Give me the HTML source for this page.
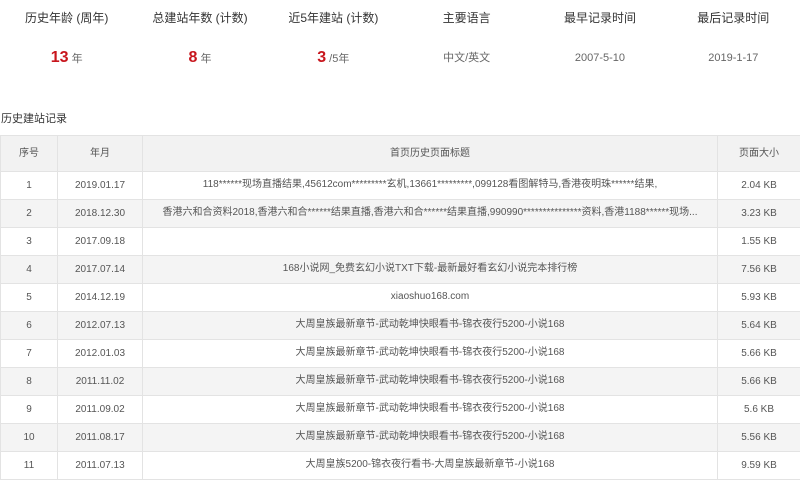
<!DOCTYPE html>
<html><head><meta charset="utf-8"><style>
*{margin:0;padding:0;box-sizing:border-box}
body{width:800px;height:466px;overflow:hidden;background:#fff;font-family:"Liberation Sans","Noto Sans CJK SC",sans-serif;color:#555}
.stats{display:flex;height:100px}
.st{width:133.33px;text-align:center}
.st .l{font-size:12px;color:#333;margin-top:11px;height:20px;line-height:14px}
.st .v{margin-top:19px;font-size:11px;color:#666;height:20px;line-height:16px}
.st .v b{font-size:16px;color:#c8161d;font-weight:bold;margin-right:3px}
h3{font-size:11px;font-weight:normal;color:#333;position:absolute;top:110px;left:1px}
table{position:absolute;top:135px;left:0;width:800px;border-collapse:collapse;font-size:10px;color:#555;table-layout:fixed}
td{border:1px solid #e3e3e3;text-align:center;height:28px;padding:0;line-height:12px;vertical-align:middle;white-space:nowrap;overflow:hidden}
td span{display:inline-block;line-height:12px;vertical-align:middle}
tr.h td{height:36px;background:#f2f2f2}
tr:nth-child(odd):not(.h) td{background:#f4f4f4}
</style></head><body>
<div class="stats">
<div class="st"><div class="l">历史年龄 (周年)</div><div class="v"><b>13</b>年</div></div>
<div class="st"><div class="l">总建站年数 (计数)</div><div class="v"><b>8</b>年</div></div>
<div class="st"><div class="l">近5年建站 (计数)</div><div class="v"><b>3</b>/5年</div></div>
<div class="st"><div class="l">主要语言</div><div class="v">中文/英文</div></div>
<div class="st"><div class="l">最早记录时间</div><div class="v">2007-5-10</div></div>
<div class="st"><div class="l">最后记录时间</div><div class="v">2019-1-17</div></div>
</div>
<h3>历史建站记录</h3>
<table>
<colgroup><col style="width:57px"><col style="width:85px"><col style="width:575px"><col style="width:83px"></colgroup>
<tr class="h"><td>序号</td><td>年月</td><td>首页历史页面标题</td><td>页面大小</td></tr>
<tr><td>1</td><td>2019.01.17</td><td><span>118******现场直播结果,45612com*********玄机,13661*********,099128看图解特马,香港夜明珠******结果,</span></td><td>2.04 KB</td></tr>
<tr><td>2</td><td>2018.12.30</td><td><span>香港六和合资料2018,香港六和合******结果直播,香港六和合******结果直播,990990***************资料,香港1188******现场...</span></td><td>3.23 KB</td></tr>
<tr><td>3</td><td>2017.09.18</td><td></td><td>1.55 KB</td></tr>
<tr><td>4</td><td>2017.07.14</td><td><span>168小说网_免费玄幻小说TXT下载-最新最好看玄幻小说完本排行榜</span></td><td>7.56 KB</td></tr>
<tr><td>5</td><td>2014.12.19</td><td><span>xiaoshuo168.com</span></td><td>5.93 KB</td></tr>
<tr><td>6</td><td>2012.07.13</td><td><span>大周皇族最新章节-武动乾坤快眼看书-锦衣夜行5200-小说168</span></td><td>5.64 KB</td></tr>
<tr><td>7</td><td>2012.01.03</td><td><span>大周皇族最新章节-武动乾坤快眼看书-锦衣夜行5200-小说168</span></td><td>5.66 KB</td></tr>
<tr><td>8</td><td>2011.11.02</td><td><span>大周皇族最新章节-武动乾坤快眼看书-锦衣夜行5200-小说168</span></td><td>5.66 KB</td></tr>
<tr><td>9</td><td>2011.09.02</td><td><span>大周皇族最新章节-武动乾坤快眼看书-锦衣夜行5200-小说168</span></td><td>5.6 KB</td></tr>
<tr><td>10</td><td>2011.08.17</td><td><span>大周皇族最新章节-武动乾坤快眼看书-锦衣夜行5200-小说168</span></td><td>5.56 KB</td></tr>
<tr><td>11</td><td>2011.07.13</td><td><span>大周皇族5200-锦衣夜行看书-大周皇族最新章节-小说168</span></td><td>9.59 KB</td></tr>
</table>
</body></html>
